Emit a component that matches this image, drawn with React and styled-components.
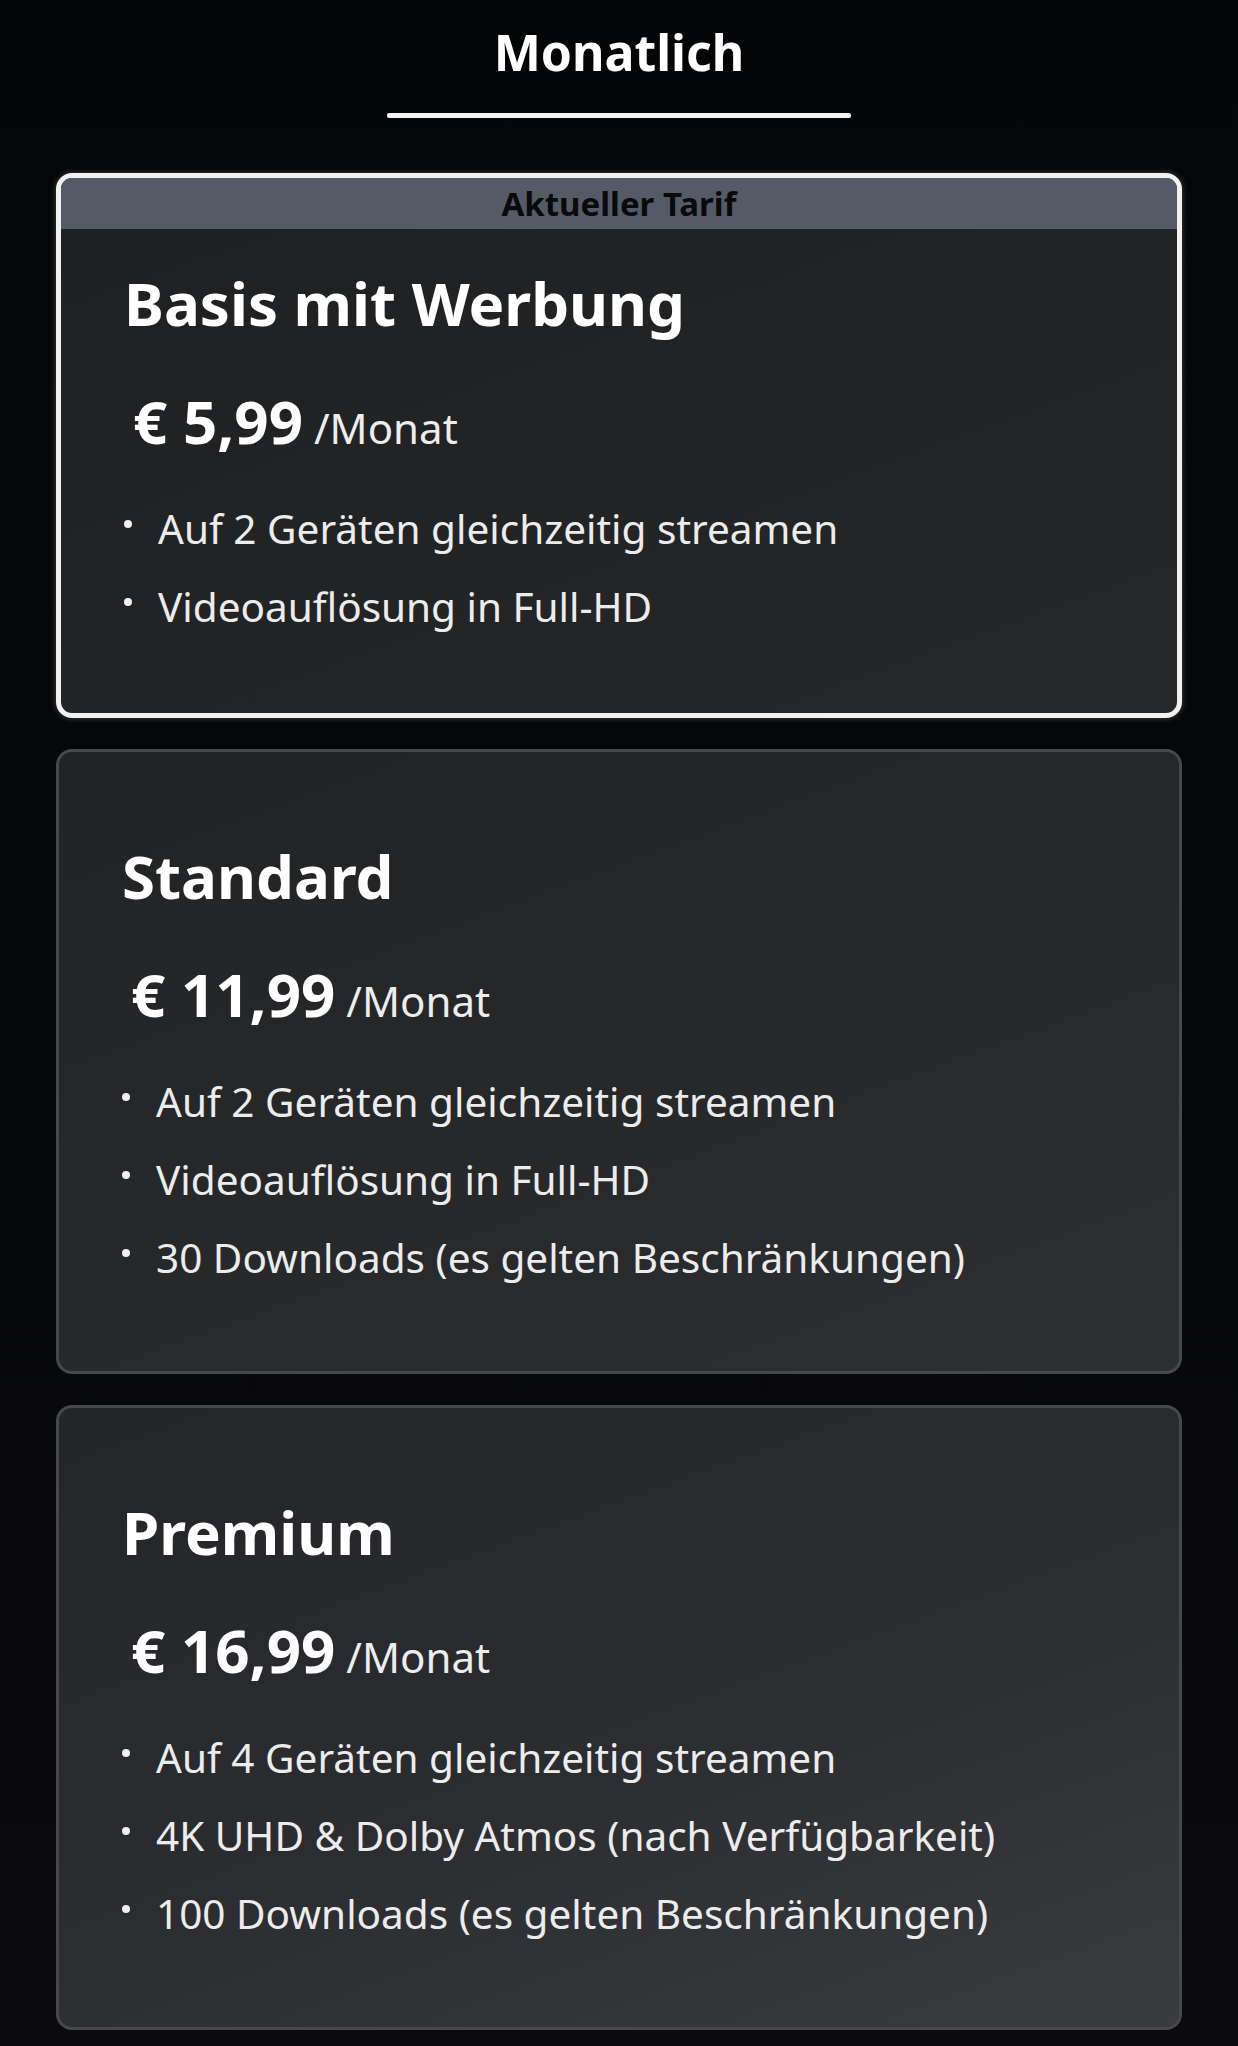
import React from 'react';
import styled, { createGlobalStyle } from 'styled-components';

const GlobalStyle = createGlobalStyle`
  html, body {
    margin: 0;
    padding: 0;
    background: #050607;
  }
  body {
    font-family: "Noto Sans", "Open Sans", sans-serif;
    color: #f4f4f4;
  }
`;

const Page = styled.div`
  min-height: 2046px;
  padding: 0 56px 20px;
  box-sizing: border-box;
  background: linear-gradient(180deg, #040506 0%, #07080a 60%, #0b0b0d 100%);
`;

const Tabs = styled.div`
  display: flex;
  justify-content: center;
  padding-top: 16px;
  margin-bottom: 55px;
`;

const Tab = styled.div`
  display: flex;
  flex-direction: column;
  align-items: center;
  width: 464px;
  font-size: 50px;
  font-weight: 700;
  line-height: 72px;
  color: #ffffff;
`;

const TabLine = styled.div`
  width: 100%;
  height: 5px;
  margin-top: 25px;
  background: #f2f2f2;
  border-radius: 2px;
`;

const PlanList = styled.div`
  display: flex;
  flex-direction: column;
  gap: 31px;
`;

const Card = styled.div`
  border-radius: 16px;
  overflow: hidden;
  border: ${p => (p.$current ? '5px solid #f1f1f1' : '3px solid #46484c')};
  background: ${p => p.$bg};
  box-shadow: ${p => (p.$current ? '0 0 6px rgba(255,255,255,0.25)' : 'none')};
`;

const Badge = styled.div`
  height: ${p => (p.$current ? '51px' : '50px')};
  display: flex;
  align-items: center;
  justify-content: center;
  background: ${p => (p.$current ? '#545b67' : 'transparent')};
  color: #0a0a0b;
  font-size: 33px;
  font-weight: 700;
`;

const Body = styled.div`
  padding: 34px 60px ${p => (p.$current ? '67px' : '74px')} 63px;
`;

const Title = styled.div`
  font-size: 60px;
  font-weight: 700;
  line-height: 80px;
  color: #ffffff;
`;

const Price = styled.div`
  margin: 42px 0 0 9px;
  font-size: 60px;
  font-weight: 700;
  line-height: 72px;
  color: #ffffff;
`;

const Period = styled.span`
  margin-left: 11px;
  font-size: 42px;
  font-weight: 400;
  line-height: 1;
  color: #ededed;
`;

const Features = styled.ul`
  list-style: none;
  margin: 33px 0 0;
  padding: 0;
`;

const Feature = styled.li`
  display: flex;
  align-items: flex-start;
  font-size: 40.5px;
  line-height: 78px;
  color: #ececec;
`;

const Dot = styled.span`
  flex: none;
  width: 8px;
  height: 8px;
  border-radius: 50%;
  background: #f0f0f0;
  margin: 30px 26px 0 0;
`;

const plans = [
  {
    name: 'Basis mit Werbung',
    price: '€ 5,99',
    current: true,
    bg: 'linear-gradient(160deg, #1e2021 0%, #232425 60%, #262728 100%)',
    features: ['Auf 2 Geräten gleichzeitig streamen', 'Videoauflösung in Full-HD'],
  },
  {
    name: 'Standard',
    price: '€ 11,99',
    bg: 'linear-gradient(160deg, #212325 0%, #27282a 55%, #2e2f32 100%)',
    features: [
      'Auf 2 Geräten gleichzeitig streamen',
      'Videoauflösung in Full-HD',
      '30 Downloads (es gelten Beschränkungen)',
    ],
  },
  {
    name: 'Premium',
    price: '€ 16,99',
    bg: 'linear-gradient(160deg, #242528 0%, #2b2c2f 50%, #3a3b3e 100%)',
    features: [
      'Auf 4 Geräten gleichzeitig streamen',
      '4K UHD & Dolby Atmos (nach Verfügbarkeit)',
      '100 Downloads (es gelten Beschränkungen)',
    ],
  },
];

const App = () => {
  return (
    <Page>
      <GlobalStyle />
      <Tabs>
        <Tab>
          Monatlich
          <TabLine />
        </Tab>
      </Tabs>
      <PlanList>
        {plans.map(plan => (
          <Card key={plan.name} $current={plan.current} $bg={plan.bg}>
            <Badge $current={plan.current}>{plan.current ? 'Aktueller Tarif' : null}</Badge>
            <Body $current={plan.current}>
              <Title>{plan.name}</Title>
              <Price>
                {plan.price}
                <Period>/Monat</Period>
              </Price>
              <Features>
                {plan.features.map(f => (
                  <Feature key={f}>
                    <Dot />
                    {f}
                  </Feature>
                ))}
              </Features>
            </Body>
          </Card>
        ))}
      </PlanList>
    </Page>
  );
};

export default App;
